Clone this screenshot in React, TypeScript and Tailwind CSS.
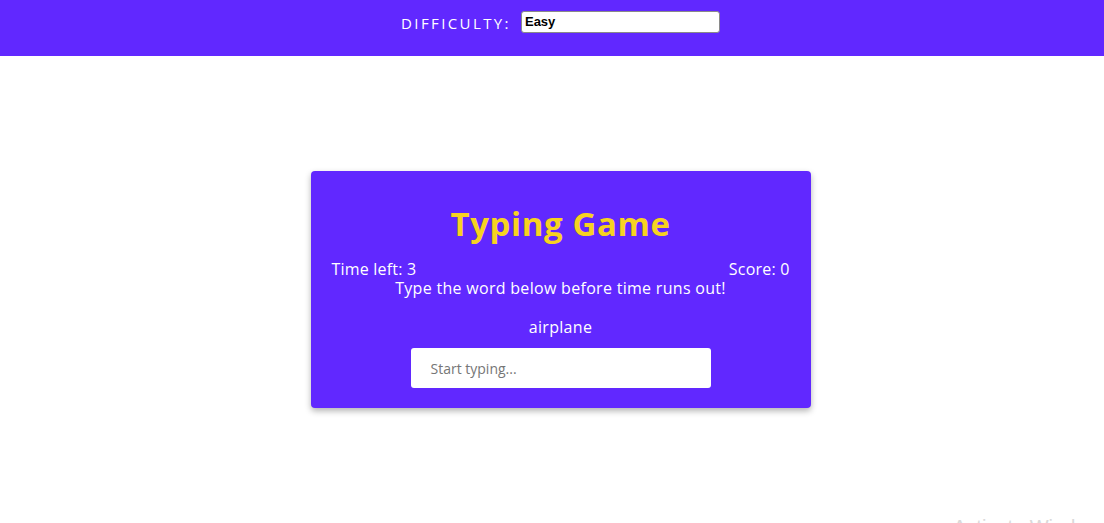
import React from "react";

export default function App() {
  const font = { fontFamily: '"Open Sans", "DejaVu Sans", sans-serif' };
  return (
    <div className="relative min-h-[523px] w-full overflow-hidden bg-white" style={font}>
      <header className="flex h-[56px] items-start justify-center bg-[#6128ff] pl-[17px] pt-[11px]">
        <label className="mr-[10px] mt-[1px] text-[15px] tracking-[2.4px] text-white">DIFFICULTY:</label>
        <div className="flex h-[22px] w-[199px] items-center rounded-[3px] border border-[#8a8a8a] bg-white pl-[3px] text-[13px] font-bold text-black" style={{ fontFamily: '"Liberation Sans", Arial, sans-serif' }}>
          Easy
        </div>
      </header>
      <main className="flex justify-center pl-[17px] pt-[115px]">
        <div className="flex w-[500px] flex-col items-center rounded-[4px] bg-[#6128ff] px-[21px] pb-[20px] pt-[33px] text-white shadow-[0_3px_6px_rgba(0,0,0,0.3)]">
          <h1 className="text-[33px] font-bold leading-[40px] tracking-[0.6px] text-[#f7d221]">Typing Game</h1>
          <div className="mt-[16px] flex w-full justify-between text-[16px] leading-[19px] tracking-[0.2px]">
            <span>Time left: 3</span>
            <span>Score: 0</span>
          </div>
          <p className="text-[16px] leading-[19px] tracking-[0.3px]">Type the word below before time runs out!</p>
          <p className="mt-[17px] text-[16px] leading-[24px] tracking-[0.3px]">airplane</p>
          <div className="mt-[9px] flex h-[40px] w-[300px] items-center rounded-[3px] bg-white px-[20px] text-[14px] text-[#767676]">
            Start typing...
          </div>
        </div>
      </main>
      <div className="absolute left-[953px] top-[512px] whitespace-nowrap text-[20px] text-[#d9d9d9]" style={{ fontFamily: '"Liberation Sans", sans-serif' }}>
        Activate Windows
      </div>
    </div>
  );
}
